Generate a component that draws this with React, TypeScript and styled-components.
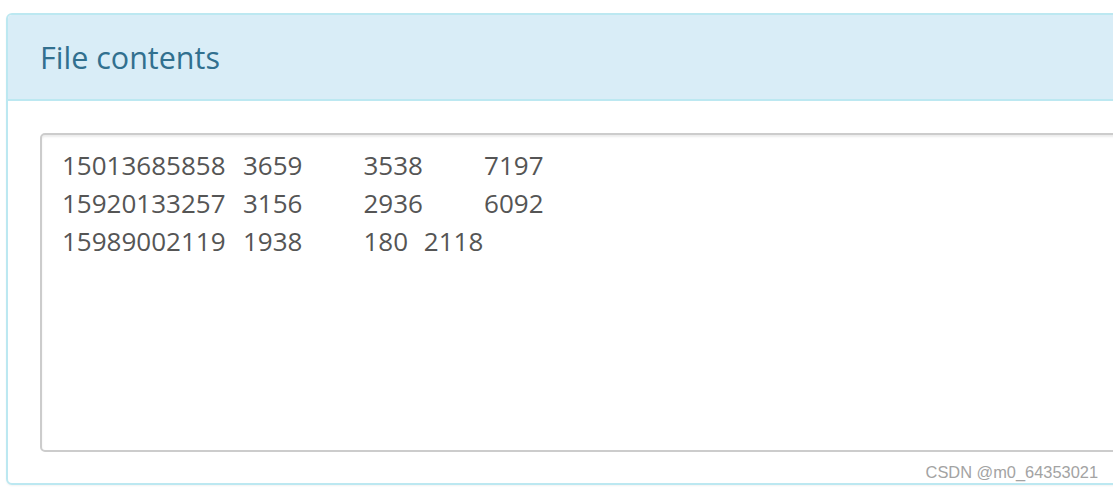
import styled, { createGlobalStyle } from "styled-components";

const GlobalStyle = createGlobalStyle`
html, body {
    margin: 0;
    padding: 0;
    background: #fff;
    overflow: hidden;
}
`;

const Page = styled.div`
position: relative;
width: 1113px;
height: 492px;
overflow: hidden;
padding: 13px 0 0 6px;
box-sizing: border-box;
font-family: "Open Sans", "Noto Sans", sans-serif;
`;

const Panel = styled.section`
width: 1200px;
height: 472px;
box-sizing: border-box;
border: 2px solid #bce8f1;
border-radius: 6px;
background: #fff;
box-shadow: 0 1px 2px rgba(0, 0, 0, 0.05);
display: flex;
flex-direction: column;
`;

const PanelHeading = styled.div`
height: 86px;
box-sizing: border-box;
background: #d9edf7;
border-bottom: 2px solid #bce8f1;
border-radius: 4px 4px 0 0;
padding: 0 0 0 32px;
display: flex;
align-items: center;
`;

const Title = styled.h3`
margin: 0;
font-size: 30.5px;
font-weight: 400;
color: #31708f;
line-height: 1;
`;

const PanelBody = styled.div`
flex: 1;
padding: 32px 0 31px 32px;
display: flex;
`;

const Contents = styled.textarea`
flex: 1;
resize: none;
box-sizing: border-box;
border: 2px solid #ccc;
border-radius: 5px;
box-shadow: inset 0 2px 2px rgba(0, 0, 0, 0.075);
padding: 11px 20px;
font-family: "Open Sans", "Noto Sans", sans-serif;
font-size: 26px;
line-height: 38px;
color: #555;
tab-size: 60.3px;
-moz-tab-size: 60.3px;
outline: none;
overflow: hidden;
white-space: pre;
`;

const Watermark = styled.span`
position: absolute;
right: 15px;
bottom: 10px;
font-family: "Liberation Sans", Arial, sans-serif;
font-size: 16.4px;
color: #a3a3a3;
`;

const fileText = [
    "15013685858\t3659\t3538\t7197",
    "15920133257\t3156\t2936\t6092",
    "15989002119\t1938\t180\t2118",
].join("\n");

const App = (): JSX.Element => {
    return (
        <Page>
            <GlobalStyle />
            <Panel>
                <PanelHeading>
                    <Title>File contents</Title>
                </PanelHeading>
                <PanelBody>
                    <Contents readOnly value={fileText} />
                </PanelBody>
            </Panel>
            <Watermark>CSDN @m0_64353021</Watermark>
        </Page>
    );
};

export default App;
